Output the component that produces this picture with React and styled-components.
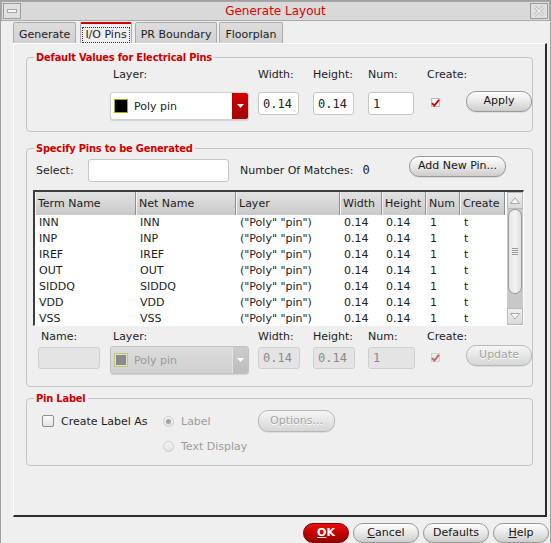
import React from 'react';
import styled, { createGlobalStyle, css } from 'styled-components';

const FONT = `"DejaVu Sans", "Liberation Sans", sans-serif`;
const MONO = `"DejaVu Sans Mono", "Liberation Mono", monospace`;
const COLS = '101px 100px 104px 42px 44px 34px 45px';
const FIELD_COLS = '72px 148px 55px 55px 59px 39px 66px';

const GlobalStyle = createGlobalStyle`
  html, body { margin: 0; padding: 0; background: #efefef; }
  body { font-family: ${FONT}; font-size: 11px; line-height: 13px; color: #1c1c1c; }
  *, *::before, *::after { box-sizing: border-box; }
`;

const Window = styled.div`
  width: 551px;
  height: 543px;
  display: flex;
  flex-direction: column;
  background: #efefef;
  border: 1px solid #a0a0a0;
  border-bottom: none;
  overflow: hidden;
`;

const TitleBar = styled.div`
  flex: none;
  height: 20px;
  display: flex;
  align-items: center;
  padding: 0 1px;
  background: #d9d9d9;
  border: 1px solid #a9a9a9;
`;

const TitleButton = styled.div`
  width: 18px;
  height: 16px;
  flex: none;
  display: flex;
  align-items: center;
  justify-content: center;
  border: 1px solid #9c9c9c;
  background: #e0e0e0;
`;

const Title = styled.div`
  flex: 1;
  text-align: center;
  color: #dd0000;
  font-size: 12px;
  line-height: 16px;
`;

const TabBar = styled.div`
  flex: none;
  height: 22px;
  display: flex;
  align-items: flex-end;
  gap: 2px;
  padding-left: 12px;
`;

const Tab = styled.div`
  height: 21px;
  padding: 5px 5px 0;
  border: 1px solid #ababab;
  border-bottom: none;
  border-radius: 2px 2px 0 0;
  background: linear-gradient(#dddddd, #d1d1d1);
  white-space: nowrap;
  ${p => p.$active && css`
    border-top: 2px solid #cc0000;
    padding: 4px 2px 0;
    background: #efefef;
    margin: 0 1px 0 2px;
  `}
`;

const Focus = styled.span`
  display: block;
  height: 14px;
  padding: 0 2px;
  outline: 1px dotted #333;
`;

const Panel = styled.div`
  flex: 1;
  display: flex;
  flex-direction: column;
  margin: 0 3px 0 12px;
  padding: 7px 12px 0 12px;
  border-top: 1px solid #ffffff;
  border-left: 1px solid #ffffff;
  border-right: 2px solid #2b2b2b;
  border-bottom: 2px solid #2b2b2b;
`;

const Group = styled.fieldset`
  margin: ${p => p.$mt || 0}px 0 0;
  padding: 0;
  min-width: 0;
  border: 1px solid #c4c4c4;
  border-radius: 4px;
`;

const Legend = styled.legend`
  margin-left: 7px;
  padding: 0 2px;
  color: #cc0000;
  font-family: "DejaVu Sans Condensed", "DejaVu Sans", sans-serif;
  font-stretch: condensed;
  font-weight: bold;
  font-size: 11px;
  line-height: 13px;
  letter-spacing: -0.2px;
`;

const FieldGrid = styled.div`
  display: grid;
  grid-template-columns: ${FIELD_COLS};
  row-gap: ${p => p.$rowGap}px;
  align-items: start;
  padding: ${p => p.$pt || 0}px 0 ${p => p.$pb || 0}px 11px;
`;

const FieldLabel = styled.div`
  padding-left: ${p => p.$indent || 0}px;
  white-space: nowrap;
`;

const TextBox = styled.input`
  display: block;
  width: ${p => p.$w}px;
  height: ${p => (p.disabled ? 22 : 23)}px;
  margin: ${p => (p.disabled ? 1 : 0)}px 0 0;
  padding: 0 0 0 4px;
  border: 1px solid ${p => (p.disabled ? '#cfcfcf' : '#c6c6c6')};
  border-radius: 3px;
  background: ${p => (p.disabled ? '#e4e4e4' : '#ffffff')};
  color: ${p => (p.disabled ? '#8a8a8a' : '#222222')};
  font-family: ${p => (p.$sans ? FONT : MONO)};
  font-size: 12px;
  outline: none;
`;

const Combo = styled.div`
  display: flex;
  width: 139px;
  height: 28px;
  border: 1px solid ${p => (p.$disabled ? '#c2c2c2' : '#d0d0d0')};
  border-radius: 3px;
  overflow: hidden;
  background: ${p => (p.$disabled ? 'linear-gradient(#dcdcdc, #d0d0d0)' : '#ffffff')};
  box-shadow: 0 1px 1px rgba(0, 0, 0, 0.12);
`;

const ComboValue = styled.div`
  flex: 1;
  display: flex;
  align-items: center;
  gap: 6px;
  padding-left: 3px;
  color: ${p => (p.$disabled ? '#9a9a9a' : '#1c1c1c')};
  font-size: 11px;
`;

const Swatch = styled.span`
  width: 14px;
  height: 14px;
  flex: none;
  border: 1px solid ${p => (p.$disabled ? '#c4c47a' : '#a9a900')};
  box-shadow: inset 0 0 0 1px ${p => (p.$disabled ? '#e0e0c8' : '#000000')};
  background: ${p => (p.$disabled ? '#8a8a8a' : '#000000')};
`;

const ComboArrow = styled.div`
  width: 16px;
  flex: none;
  display: flex;
  align-items: center;
  justify-content: center;
  background: ${p => (p.$disabled ? 'linear-gradient(#cdcdcd, #bdbdbd)' : 'linear-gradient(#d80000, #a00000)')};
  border-left: 1px solid ${p => (p.$disabled ? '#e2e2e2' : '#b00000')};
`;

const SmallCheck = styled.span`
  display: flex;
  align-items: center;
  justify-content: center;
  width: 9px;
  height: 9px;
  margin: ${p => p.$mt}px 0 0 4px;
  border: 1px solid ${p => (p.$disabled ? '#d2d2d2' : '#bcbcbc')};
  background: ${p => (p.$disabled ? '#ebebeb' : '#ffffff')};
  overflow: visible;
`;

const PillButton = styled.button`
  display: block;
  width: ${p => p.$w}px;
  height: ${p => p.$h || 21}px;
  margin: ${p => p.$mt || 0}px 0 0 ${p => p.$ml || 0};
  padding: 0 0 2px;
  border: 1px solid ${p => (p.disabled ? '#b8b8b8' : '#999999')};
  border-radius: 10px;
  background: ${p => (p.disabled
    ? 'linear-gradient(#f6f6f6, #e4e4e4 55%, #d6d6d6)'
    : 'linear-gradient(#fdfdfd, #e8e8e8 50%, #cdcdcd)')};
  color: ${p => (p.disabled ? '#a4a4a4' : '#151515')};
  text-shadow: ${p => (p.disabled ? '0 1px 0 #ffffff' : 'none')};
  box-shadow: 0 1px 0 rgba(0, 0, 0, 0.08);
  font-family: ${FONT};
  font-size: 11px;
  line-height: 13px;
  white-space: nowrap;
  ${p => p.$primary && css`
    border-color: #780000;
    background: linear-gradient(#ea1010, #c00000 55%, #940000);
    color: #ffffff;
    font-weight: bold;
  `}
`;

const SelectRow = styled.div`
  display: flex;
  align-items: flex-start;
  height: 27px;
  padding: 1px 26px 0 9px;
`;

const RowText = styled.div`
  margin: 8px 0 0 ${p => p.$ml || 0}px;
  width: ${p => (p.$w ? `${p.$w}px` : 'auto')};
  white-space: nowrap;
  ${p => p.$mono && css`
    font-family: ${MONO};
    font-size: 12px;
  `}
`;

const TableFrame = styled.div`
  display: flex;
  height: 136px;
  margin: 8px 8px 0 6px;
  border-top: 2px solid #3c3c3c;
  border-left: 2px solid #3c3c3c;
  border-right: 1px solid #ffffff;
  border-bottom: 1px solid #ffffff;
  background: #ffffff;
`;

const TableMain = styled.div`
  width: 470px;
  flex: none;
  display: flex;
  flex-direction: column;
  overflow: hidden;
`;

const HeaderRow = styled.div`
  display: grid;
  grid-template-columns: ${COLS};
  height: 23px;
  flex: none;
`;

const HeaderCell = styled.div`
  padding-left: 3px;
  line-height: 23px;
  white-space: nowrap;
  overflow: hidden;
  background: linear-gradient(#e2e2e2, #c9c9c9);
  border-right: 1px solid #8e8e8e;
  box-shadow: inset 1px 0 0 #f4f4f4;
`;

const Body = styled.div`
  flex: 1;
  overflow: hidden;
`;

const BodyRow = styled.div`
  display: grid;
  grid-template-columns: ${COLS};
  height: 16px;
`;

const BodyCell = styled.div`
  padding-left: 4px;
  line-height: 16px;
  white-space: nowrap;
  overflow: hidden;
`;

const ScrollBar = styled.div`
  width: 16px;
  margin-left: 2px;
  flex: none;
  display: flex;
  flex-direction: column;
  background: #c8c8c8;
`;

const ScrollButton = styled.div`
  height: 17px;
  flex: none;
  display: flex;
  align-items: center;
  justify-content: center;
  background: linear-gradient(#efefef, #dadada);
  border: 1px solid #b9b9b9;
`;

const Track = styled.div`
  flex: 1;
  padding: 0 1px;
`;

const Thumb = styled.div`
  height: 85px;
  display: flex;
  flex-direction: column;
  align-items: center;
  justify-content: center;
  gap: 1px;
  border: 1px solid #9c9c9c;
  border-radius: 7px;
  background: linear-gradient(90deg, #e4e4e4, #f4f4f4 50%, #dedede);
`;

const Grip = styled.span`
  width: 6px;
  height: 1px;
  background: #9a9a9a;
`;

const PinLabelGrid = styled.div`
  display: grid;
  grid-template-columns: 121px 95px auto;
  grid-template-rows: 22px 24px;
  row-gap: 2px;
  align-items: center;
  padding: 5px 0 7px 15px;
`;

const Option = styled.label`
  display: flex;
  align-items: center;
  gap: 7px;
  white-space: nowrap;
  color: ${p => (p.$disabled ? '#9c9c9c' : '#1c1c1c')};
  grid-column: ${p => p.$col};
  grid-row: ${p => p.$row};
`;

const BigCheck = styled.span`
  width: 12px;
  height: 12px;
  border: 1px solid #8e8e8e;
  border-radius: 2px;
  background: linear-gradient(#fbfbfb, #e2e2e2);
`;

const Radio = styled.span`
  width: 11px;
  height: 11px;
  display: flex;
  align-items: center;
  justify-content: center;
  border: 1px solid #cdcdcd;
  border-radius: 50%;
  background: linear-gradient(#f4f4f4, #e2e2e2);
  &::after {
    content: '';
    width: 5px;
    height: 5px;
    border-radius: 50%;
    background: ${p => (p.$checked ? '#a3a3a3' : 'transparent')};
  }
`;

const ButtonBar = styled.div`
  flex: none;
  height: 26px;
  display: flex;
  justify-content: flex-end;
  align-items: flex-start;
  gap: 4px;
  padding: 6px 1px 0 0;
`;

const rows = ['INN', 'INP', 'IREF', 'OUT', 'SIDDQ', 'VDD', 'VSS'];
const tabs = ['Generate', 'I/O Pins', 'PR Boundary', 'Floorplan'];

function Check({ disabled }) {
  return (
    <svg width="9" height="8" viewBox="0 0 9 8" style={{ overflow: 'visible' }}>
      <path d="M1 4.2 L3.3 6.6 L8 0.8" fill="none" stroke={disabled ? '#b46a6a' : '#d00000'} strokeWidth="1.9" />
    </svg>
  );
}

function LayerCombo({ disabled }) {
  return (
    <Combo $disabled={disabled}>
      <ComboValue $disabled={disabled}>
        <Swatch $disabled={disabled} />
        Poly pin
      </ComboValue>
      <ComboArrow $disabled={disabled}>
        <svg width="7" height="4" viewBox="0 0 7 4">
          <path d="M0 0H7L3.5 4Z" fill="#ffffff" />
        </svg>
      </ComboArrow>
    </Combo>
  );
}

function FieldRows({ disabled }) {
  return (
    <>
      {disabled ? <FieldLabel $indent={3}>Name:</FieldLabel> : <span />}
      <FieldLabel $indent={3}>Layer:</FieldLabel>
      <FieldLabel>Width:</FieldLabel>
      <FieldLabel>Height:</FieldLabel>
      <FieldLabel>Num:</FieldLabel>
      <FieldLabel>Create:</FieldLabel>
      <span />
      {disabled ? <TextBox $w={62} $sans disabled readOnly defaultValue="" /> : <span />}
      <LayerCombo disabled={disabled} />
      <TextBox $w={disabled ? 42 : 41} disabled={disabled} readOnly defaultValue="0.14" />
      <TextBox $w={disabled ? 42 : 41} disabled={disabled} readOnly defaultValue="0.14" />
      <TextBox $w={disabled ? 47 : 46} disabled={disabled} readOnly defaultValue="1" />
      <SmallCheck $disabled={disabled} $mt={disabled ? 7 : 6}>
        <Check disabled={disabled} />
      </SmallCheck>
      <PillButton $w={66} $mt={-1} disabled={disabled}>{disabled ? 'Update' : 'Apply'}</PillButton>
    </>
  );
}

export default function App() {
  return (
    <>
      <GlobalStyle />
      <Window>
        <TitleBar>
          <TitleButton>
            <svg width="10" height="4" viewBox="0 0 10 4">
              <rect x="0.5" y="0.5" width="9" height="3" fill="#f6f6f6" stroke="#a6a6a6" />
            </svg>
          </TitleButton>
          <Title>Generate Layout</Title>
          <TitleButton>
            <svg width="12" height="12" viewBox="0 0 12 12">
              <path d="M1.5 1.5L10.5 10.5M10.5 1.5L1.5 10.5" stroke="#bdbdbd" strokeWidth="3.2" />
              <path d="M1.5 1.5L10.5 10.5M10.5 1.5L1.5 10.5" stroke="#ececec" strokeWidth="1.4" />
            </svg>
          </TitleButton>
        </TitleBar>

        <TabBar>
          {tabs.map(t => (
            <Tab key={t} $active={t === 'I/O Pins'}>
              {t === 'I/O Pins' ? <Focus>{t}</Focus> : t}
            </Tab>
          ))}
        </TabBar>

        <Panel>
          <Group>
            <Legend>Default Values for Electrical Pins</Legend>
            <FieldGrid $rowGap={11} $pt={4} $pb={11}>
              <FieldRows />
            </FieldGrid>
          </Group>

          <Group $mt={10}>
            <Legend>Specify Pins to be Generated</Legend>
            <SelectRow>
              <RowText $w={52}>Select:</RowText>
              <TextBox $w={141} $sans readOnly defaultValue="" style={{ marginTop: 3 }} />
              <RowText $ml={11}>Number Of Matches:</RowText>
              <RowText $ml={9} $mono>0</RowText>
              <PillButton $w={97} $ml="auto">Add New Pin...</PillButton>
            </SelectRow>

            <TableFrame>
              <TableMain>
                <HeaderRow>
                  {['Term Name', 'Net Name', 'Layer', 'Width', 'Height', 'Num', 'Create'].map(h => (
                    <HeaderCell key={h}>{h}</HeaderCell>
                  ))}
                </HeaderRow>
                <Body>
                  {rows.map(r => (
                    <BodyRow key={r}>
                      <BodyCell>{r}</BodyCell>
                      <BodyCell>{r}</BodyCell>
                      <BodyCell>("Poly" "pin")</BodyCell>
                      <BodyCell>0.14</BodyCell>
                      <BodyCell>0.14</BodyCell>
                      <BodyCell>1</BodyCell>
                      <BodyCell>t</BodyCell>
                    </BodyRow>
                  ))}
                </Body>
              </TableMain>
              <ScrollBar>
                <ScrollButton>
                  <svg width="10" height="7" viewBox="0 0 10 7">
                    <path d="M0.5 6.5L5 0.8L9.5 6.5Z" fill="#f8f8f8" stroke="#a8a8a8" />
                  </svg>
                </ScrollButton>
                <Track>
                  <Thumb>
                    <Grip />
                    <Grip />
                    <Grip />
                    <Grip />
                  </Thumb>
                </Track>
                <ScrollButton>
                  <svg width="10" height="7" viewBox="0 0 10 7">
                    <path d="M0.5 0.5L5 6.2L9.5 0.5Z" fill="#f8f8f8" stroke="#a8a8a8" />
                  </svg>
                </ScrollButton>
              </ScrollBar>
            </TableFrame>

            <FieldGrid $rowGap={3} $pt={4} $pb={12}>
              <FieldRows disabled />
            </FieldGrid>
          </Group>

          <Group $mt={5}>
            <Legend>Pin Label</Legend>
            <PinLabelGrid>
              <Option $col={1} $row={1}>
                <BigCheck />
                Create Label As
              </Option>
              <Option $col={2} $row={1} $disabled>
                <Radio $checked />
                Label
              </Option>
              <Option $col={2} $row={2} $disabled>
                <Radio />
                Text Display
              </Option>
              <PillButton $w={77} $h={22} disabled style={{ gridColumn: 3, gridRow: 1 }}>Options...</PillButton>
            </PinLabelGrid>
          </Group>
        </Panel>

        <ButtonBar>
          <PillButton $w={46} $h={20} $primary><u>O</u>K</PillButton>
          <PillButton $w={66} $h={20}><u>C</u>ancel</PillButton>
          <PillButton $w={66} $h={20}>Defaults</PillButton>
          <PillButton $w={56} $h={20}><u>H</u>elp</PillButton>
        </ButtonBar>
      </Window>
    </>
  );
}
